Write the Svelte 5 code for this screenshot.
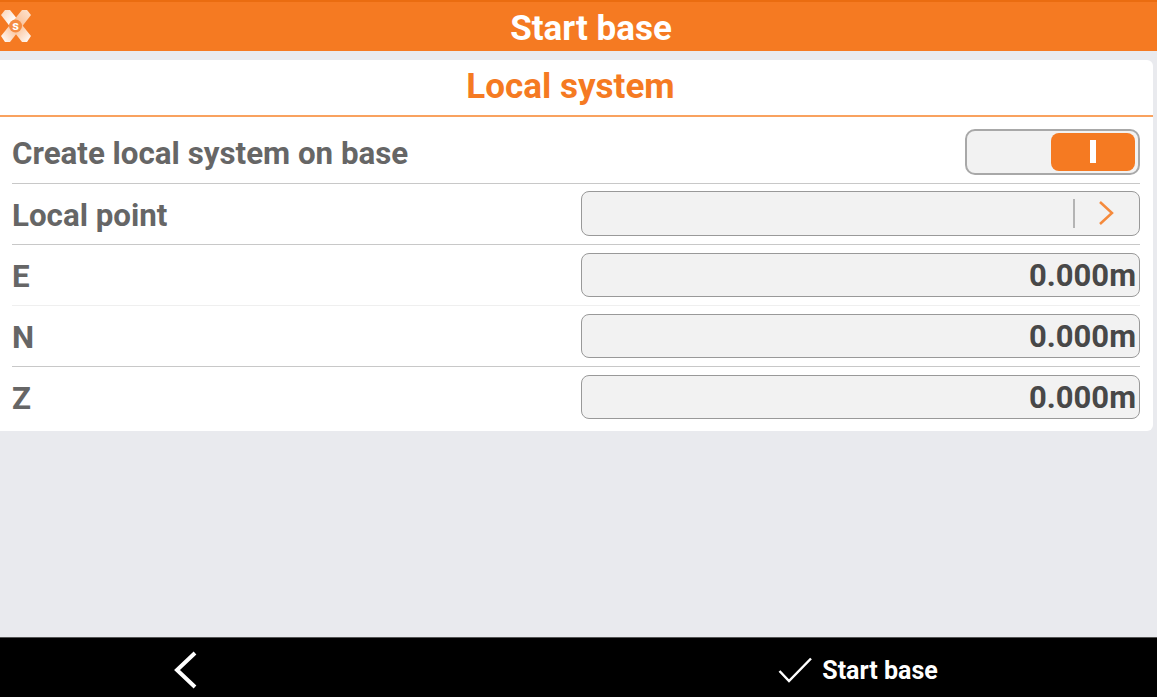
<script>
	const rows = [
		{ label: 'E', value: '0.000m', line: 'faint' },
		{ label: 'N', value: '0.000m', line: 'plain' },
		{ label: 'Z', value: '0.000m', line: 'none' }
	];
</script>

<div class="page">
	<header class="topbar">
		<svg class="logo" viewBox="0 0 32 34" width="32" height="34" aria-hidden="true">
			<defs>
				<linearGradient id="arm-a" x1="0" y1="0" x2="1" y2="1">
					<stop offset="0" stop-color="#fbd3b4" />
					<stop offset="0.4" stop-color="#fff" />
					<stop offset="0.6" stop-color="#fbc9a4" />
					<stop offset="1" stop-color="#fff" />
				</linearGradient>
				<linearGradient id="arm-b" x1="1" y1="0" x2="0" y2="1">
					<stop offset="0" stop-color="#fde6d4" />
					<stop offset="0.5" stop-color="#fbbb8d" />
					<stop offset="1" stop-color="#fff" />
				</linearGradient>
			</defs>
			<path d="M1 6L5 1h5l21 26-4 6h-5z" fill="url(#arm-a)" />
			<path d="M31 6L27 1h-5L1 27l4 6h5z" fill="url(#arm-b)" />
			<circle cx="15.500" cy="17" r="6.500" fill="#f58b41" />
			<text x="15.500" y="21" text-anchor="middle" class="logo-s">s</text>
		</svg>
		<h1>Start base</h1>
	</header>

	<main class="content">
		<section class="card">
			<h2><span>Local system</span></h2>

			<div class="row toggle-row">
				<span class="label">Create local system on base</span>
				<div class="toggle">
					<div class="knob"><i></i></div>
				</div>
			</div>

			<div class="row">
				<span class="label">Local point</span>
				<div class="field picker">
					<i class="divider"></i>
					<svg viewBox="0 0 16 26" width="16" height="26" aria-hidden="true">
						<path d="M2 2l12 11-12 11" fill="none" stroke="#f58a3c" stroke-width="2.500" />
					</svg>
				</div>
			</div>

			{#each rows as row}
				<div class="row {row.line}">
					<span class="label">{row.label}</span>
					<div class="field">{row.value}</div>
				</div>
			{/each}
		</section>
	</main>

	<footer class="bottombar">
		<div class="slot">
			<svg viewBox="0 0 24 38" width="24" height="38" aria-hidden="true">
				<path d="M22 2L4 19l18 17" fill="none" stroke="#fff" stroke-width="4" />
			</svg>
		</div>
		<div class="slot action">
			<svg viewBox="0 0 34 26" width="34" height="26" aria-hidden="true">
				<path d="M1.500 14l9.500 10L33 1.500" fill="none" stroke="#fff" stroke-width="2.500" />
			</svg>
			<span>Start base</span>
		</div>
	</footer>
</div>

<style>
	:global(body) {
		margin: 0;
		background: #e9eaee;
	}
	.page {
		display: flex;
		flex-direction: column;
		height: 697px;
		overflow: hidden;
		font-family: Roboto, "Liberation Sans", sans-serif;
	}
	.topbar {
		position: relative;
		height: 51px;
		box-sizing: border-box;
		border-top: 2px solid #ea6c10;
		padding-top: 3px;
		background: #f57a22;
		display: flex;
		align-items: center;
		justify-content: center;
		flex: none;
	}
	.logo {
		position: absolute;
		left: 0;
		top: 7px;
	}
	.logo-s {
		font-size: 13px;
		font-weight: 700;
		fill: #fff;
	}
	h1 {
		margin: 0 0 0 25px;
		font-size: 35px;
		font-weight: 700;
		color: #fff;
	}
	.content {
		flex: 1;
		padding: 9px 4px 0 0;
	}
	.card {
		background: #fff;
		border-radius: 0 6px 6px 0;
		padding-bottom: 4px;
	}
	h2 {
		margin: 0;
		height: 57px;
		box-sizing: border-box;
		border-bottom: 2px solid #f9a25f;
		padding: 0 12px 3px 0;
		display: flex;
		align-items: center;
		justify-content: center;
		font-size: 35px;
		font-weight: 700;
		color: #f57a22;
	}
	.row {
		display: flex;
		align-items: center;
		justify-content: space-between;
		height: 61px;
		margin: 0 13px 0 12px;
		box-sizing: border-box;
		border-bottom: 1px solid #c8c8c8;
	}
	.row.faint {
		border-bottom-color: #efefef;
	}
	.row.none {
		border-bottom: 0;
		height: 60px;
	}
	.toggle-row {
		height: 67px;
	}
	.label {
		padding-top: 2px;
		font-size: 31.300px;
		font-weight: 700;
		color: #666;
	}
	.toggle-row .label {
		padding-top: 6px;
	}
	.field {
		width: 559px;
		height: 44px;
		box-sizing: border-box;
		border: 1px solid #999;
		border-radius: 8px;
		background: #f2f2f2;
		padding-right: 3px;
		display: flex;
		align-items: center;
		justify-content: flex-end;
		font-size: 31px;
		font-weight: 700;
		color: #484848;
	}
	.picker {
		height: 45px;
		margin-bottom: 2px;
		padding-right: 25px;
		gap: 23px;
	}
	.divider {
		width: 2px;
		height: 29px;
		background: #b4b4b4;
	}
	.toggle {
		width: 175px;
		height: 46px;
		margin-top: 3px;
		box-sizing: border-box;
		border: 2px solid #a8a8a8;
		border-radius: 10px;
		background: #f2f2f2;
		padding: 2px 3px 2px 2px;
		display: flex;
		justify-content: flex-end;
	}
	.knob {
		width: 84px;
		border-radius: 8px;
		background: #f57a22;
		display: flex;
		align-items: center;
		justify-content: center;
	}
	.knob i {
		width: 6px;
		height: 23px;
		background: #fff;
	}
	.bottombar {
		flex: none;
		height: 60px;
		box-sizing: border-box;
		border-top: 1px solid #555;
		padding-top: 5px;
		background: #000;
		display: grid;
		grid-template-columns: 370px 598px;
		justify-content: space-between;
		color: #fff;
	}
	.slot {
		display: flex;
		align-items: center;
		justify-content: center;
		gap: 10px;
	}
	.action span {
		font-size: 25px;
		font-weight: 700;
	}
</style>
